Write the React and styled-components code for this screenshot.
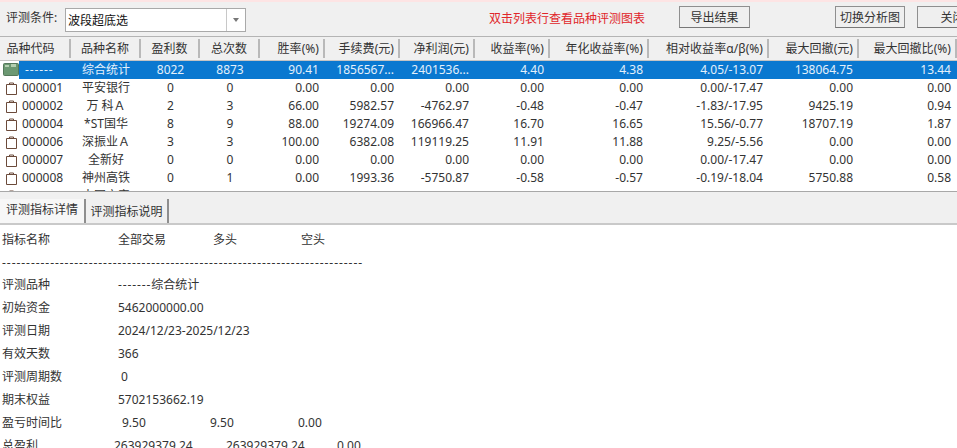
import styled, { createGlobalStyle } from "styled-components";

const GlobalStyle = createGlobalStyle`
  html, body { margin: 0; padding: 0; background: #fff; }
  body {
    width: 957px;
    height: 448px;
    overflow: hidden;
    font-family: "Noto Sans", "Noto Sans CJK SC", sans-serif;
    font-size: 12px;
    color: #333;
  }
`;

const cols = [71, 70, 59, 60, 65, 75, 75, 75, 99, 120, 90, 98];
const gridCols = cols.map((w) => `${w}px`).join(" ");

const heads = ["品种代码", "品种名称", "盈利数", "总次数", "胜率(%)", "手续费(元)", "净利润(元)", "收益率(%)", "年化收益率(%)", "相对收益率α/β(%)", "最大回撤(元)", "最大回撤比(%)"];

const rows = [
  ["------", "综合统计", "8022", "8873", "90.41", "1856567...", "2401536...", "4.40", "4.38", "4.05/-13.07", "138064.75", "13.44"],
  ["000001", "平安银行", "0", "0", "0.00", "0.00", "0.00", "0.00", "0.00", "0.00/-17.47", "0.00", "0.00"],
  ["000002", "万 科Ａ", "2", "3", "66.00", "5982.57", "-4762.97", "-0.48", "-0.47", "-1.83/-17.95", "9425.19", "0.94"],
  ["000004", "*ST国华", "8", "9", "88.00", "19274.09", "166966.47", "16.70", "16.65", "15.56/-0.77", "18707.19", "1.87"],
  ["000006", "深振业Ａ", "3", "3", "100.00", "6382.08", "119119.25", "11.91", "11.88", "9.25/-5.56", "0.00", "0.00"],
  ["000007", "全新好", "0", "0", "0.00", "0.00", "0.00", "0.00", "0.00", "0.00/-17.47", "0.00", "0.00"],
  ["000008", "神州高铁", "0", "1", "0.00", "1993.36", "-5750.87", "-0.58", "-0.57", "-0.19/-18.04", "5750.88", "0.58"],
  ["000009", "中国宝安", "0", "0", "0.00", "0.00", "0.00", "0.00", "0.00", "0.00/-17.47", "0.00", "0.00"],
];

const details = [
  { label: "初始资金", value: "5462000000.00" },
  { label: "评测日期", value: "2024/12/23-2025/12/23" },
  { label: "有效天数", value: "366" },
  { label: "评测周期数", value: " 0" },
  { label: "期末权益", value: "5702153662.19" },
];

const Page = styled.div`
  width: 957px;
  height: 448px;
  display: flex;
  flex-direction: column;
  overflow: hidden;
  background: #fff;
  border-top: 2px solid #fde4e4;
  box-sizing: border-box;
`;

const Toolbar = styled.div`
  height: 34px;
  flex: none;
  display: flex;
  align-items: center;
  background: #f0f0f0;
  white-space: nowrap;
  overflow: hidden;
`;

const FieldLabel = styled.span`
  margin: 0 0 5px 6px;
  width: 59px;
  flex: none;
`;

const Combo = styled.div`
  width: 181px;
  height: 24px;
  margin-top: 2px;
  flex: none;
  display: flex;
  box-sizing: border-box;
  border: 1px solid #a9a9a9;
  background: #fff;
  line-height: 23px;
  color: #111;
  padding-left: 2px;
`;

const ComboText = styled.span`
  flex: 1;
`;

const ComboArrow = styled.div`
  width: 18px;
  border-left: 1px solid #c8c8c8;
  display: flex;
  align-items: center;
  justify-content: center;
  &::after {
    content: "";
    border-left: 3.5px solid transparent;
    border-right: 3.5px solid transparent;
    border-top: 4px solid #777;
  }
`;

const Hint = styled.span`
  margin: 0 0 2px 243px;
  width: 190px;
  flex: none;
  color: #e0262a;
`;

const ToolButton = styled.button`
  flex: none;
  width: ${(p) => p.$w}px;
  height: 22px;
  margin: 0 0 4px ${(p) => p.$gap}px;
  padding: 0;
  box-sizing: border-box;
  border: 1px solid #8f8f8f;
  border-bottom-color: #777;
  background: #efefef;
  font: inherit;
  color: #333;
  text-align: center;
  white-space: nowrap;
  overflow: hidden;
`;

const HeaderRow = styled.div`
  flex: none;
  display: grid;
  grid-template-columns: ${gridCols};
  height: 23px;
  background: #f0f0f0;
  border-top: 1px solid #b4b4b4;
  border-bottom: 1px solid #c4c4c4;
`;

const HeaderCell = styled.div`
  border-right: 2px solid #b9b9b9;
  box-sizing: border-box;
  margin: 2px 0;
  line-height: 19px;
  white-space: nowrap;
  overflow: hidden;
  text-align: ${(p) => p.$align};
  padding-right: ${(p) => p.$pad}px;
  letter-spacing: ${(p) => (p.$align === "right" ? "0.05px" : 0)};
`;

const List = styled.div`
  flex: none;
  height: 131px;
  box-sizing: border-box;
  overflow: hidden;
  background: #fff;
  border-bottom: 1px solid #a8a8a8;
`;

const Row = styled.div`
  display: grid;
  grid-template-columns: ${gridCols};
  height: 18px;
  line-height: 18px;
  color: ${(p) => (p.$selected ? "#e3f0fb" : "#333")};
  background: ${(p) => (p.$selected ? "linear-gradient(90deg, transparent 19px, #0a78d0 19px)" : "transparent")};
`;

const Cell = styled.div`
  white-space: nowrap;
  overflow: hidden;
  text-align: ${(p) => p.$align};
  padding-right: ${(p) => (p.$align === "right" ? 6 : 0)}px;
`;

const CodeCell = styled(Cell)`
  display: flex;
  align-items: center;
  padding-left: 6px;
  gap: 5px;
`;

const CodeText = styled.span`
  letter-spacing: ${(p) => (p.$dash ? "0.9px" : "0")};
`;

const DocIcon = styled.svg`
  flex: none;
`;

const FolderIcon = styled.svg`
  flex: none;
  margin: -2px 1px 0 -3px;
`;

const TabStrip = styled.div`
  flex: none;
  height: 33px;
  display: flex;
  align-items: flex-end;
  background: #f0f0f0;
  border-bottom: 2px solid #c9c9c9;
  box-sizing: border-box;
`;

const Tab = styled.div`
  height: 24px;
  padding-top: ${(p) => (p.$active ? 1 : 3)}px;
  line-height: 20px;
  box-sizing: border-box;
  text-align: center;
  width: ${(p) => p.$w}px;
  border-right: 2px solid #8e8e8e;
  background: ${(p) => (p.$active ? "#f7f7f7" : "#f0f0f0")};
`;

const Detail = styled.div`
  flex: 1;
  padding: 3px 0 0 2px;
  background: #fff;
  white-space: pre;
`;

const DetailRow = styled.div`
  display: grid;
  grid-template-columns: ${(p) => p.$cols || "116px 1fr"};
  height: 23px;
  line-height: 23px;
`;

const Dashes = styled.div`
  height: 22px;
  line-height: 23px;
  overflow: hidden;
  width: 364px;
  letter-spacing: 0.95px;
`;

const DashRun = styled.span`
  letter-spacing: 0.9px;
`;

function Icon({ selected }) {
  if (selected) {
    return (
      <FolderIcon width="16" height="13" viewBox="0 0 16 13">
        <rect x="0.5" y="0.5" width="15" height="12" rx="1" fill="#6c9872" stroke="#55785a" />
        <rect x="2" y="2" width="4" height="2" fill="#b4cfb0" />
        <rect x="8" y="1" width="5" height="3" fill="#b4cfb0" />
      </FolderIcon>
    );
  }
  return (
    <DocIcon width="11" height="13" viewBox="0 0 11 13">
      <path d="M0.5 2.5h10v10h-10z M3.5 2.5v-1.5h4v1.5" fill="#fff" stroke="#6b4a3a" />
    </DocIcon>
  );
}

function headAlign(i) {
  return i >= 4 ? "right" : "center";
}

function headPad(i) {
  if (i === 0) return 8;
  return i >= 4 ? 4 : 0;
}

export default function App() {
  return (
    <Page>
      <GlobalStyle />
      <Toolbar>
        <FieldLabel>评测条件:</FieldLabel>
        <Combo>
          <ComboText>波段超底选</ComboText>
          <ComboArrow />
        </Combo>
        <Hint>双击列表行查看品种评测图表</Hint>
        <ToolButton $w={71} $gap={0}>导出结果</ToolButton>
        <ToolButton $w={70} $gap={85}>切换分析图</ToolButton>
        <ToolButton $w={71} $gap={12}>关闭</ToolButton>
      </Toolbar>
      <HeaderRow>
        {heads.map((h, i) => (
          <HeaderCell key={h} $align={headAlign(i)} $pad={headPad(i)}>{h}</HeaderCell>
        ))}
      </HeaderRow>
      <List>
        {rows.map((r, i) => (
          <Row key={r[0]} $selected={i === 0}>
            <CodeCell $align="left">
              <Icon selected={i === 0} />
              <CodeText $dash={i === 0}>{r[0]}</CodeText>
            </CodeCell>
            {r.slice(1).map((v, j) => (
              <Cell key={j} $align={j < 3 ? "center" : "right"}>{v}</Cell>
            ))}
          </Row>
        ))}
      </List>
      <TabStrip>
        <Tab $active $w={86}>评测指标详情</Tab>
        <Tab $w={83}>评测指标说明</Tab>
      </TabStrip>
      <Detail>
        <DetailRow $cols="116px 95px 88px 1fr">
          <span>指标名称</span><span>全部交易</span><span>多头</span><span>空头</span>
        </DetailRow>
        <Dashes>{"-".repeat(75)}</Dashes>
        <DetailRow>
          <span>评测品种</span>
          <span><DashRun>-------</DashRun>综合统计</span>
        </DetailRow>
        {details.map((d) => (
          <DetailRow key={d.label}>
            <span>{d.label}</span>
            <span>{d.value}</span>
          </DetailRow>
        ))}
        <DetailRow $cols="120px 88px 88px 1fr">
          <span>盈亏时间比</span><span>9.50</span><span>9.50</span><span>0.00</span>
        </DetailRow>
        <DetailRow $cols="112px 112px 111px 1fr">
          <span>总盈利</span><span>263929379.24</span><span>263929379.24</span><span>0.00</span>
        </DetailRow>
      </Detail>
    </Page>
  );
}
